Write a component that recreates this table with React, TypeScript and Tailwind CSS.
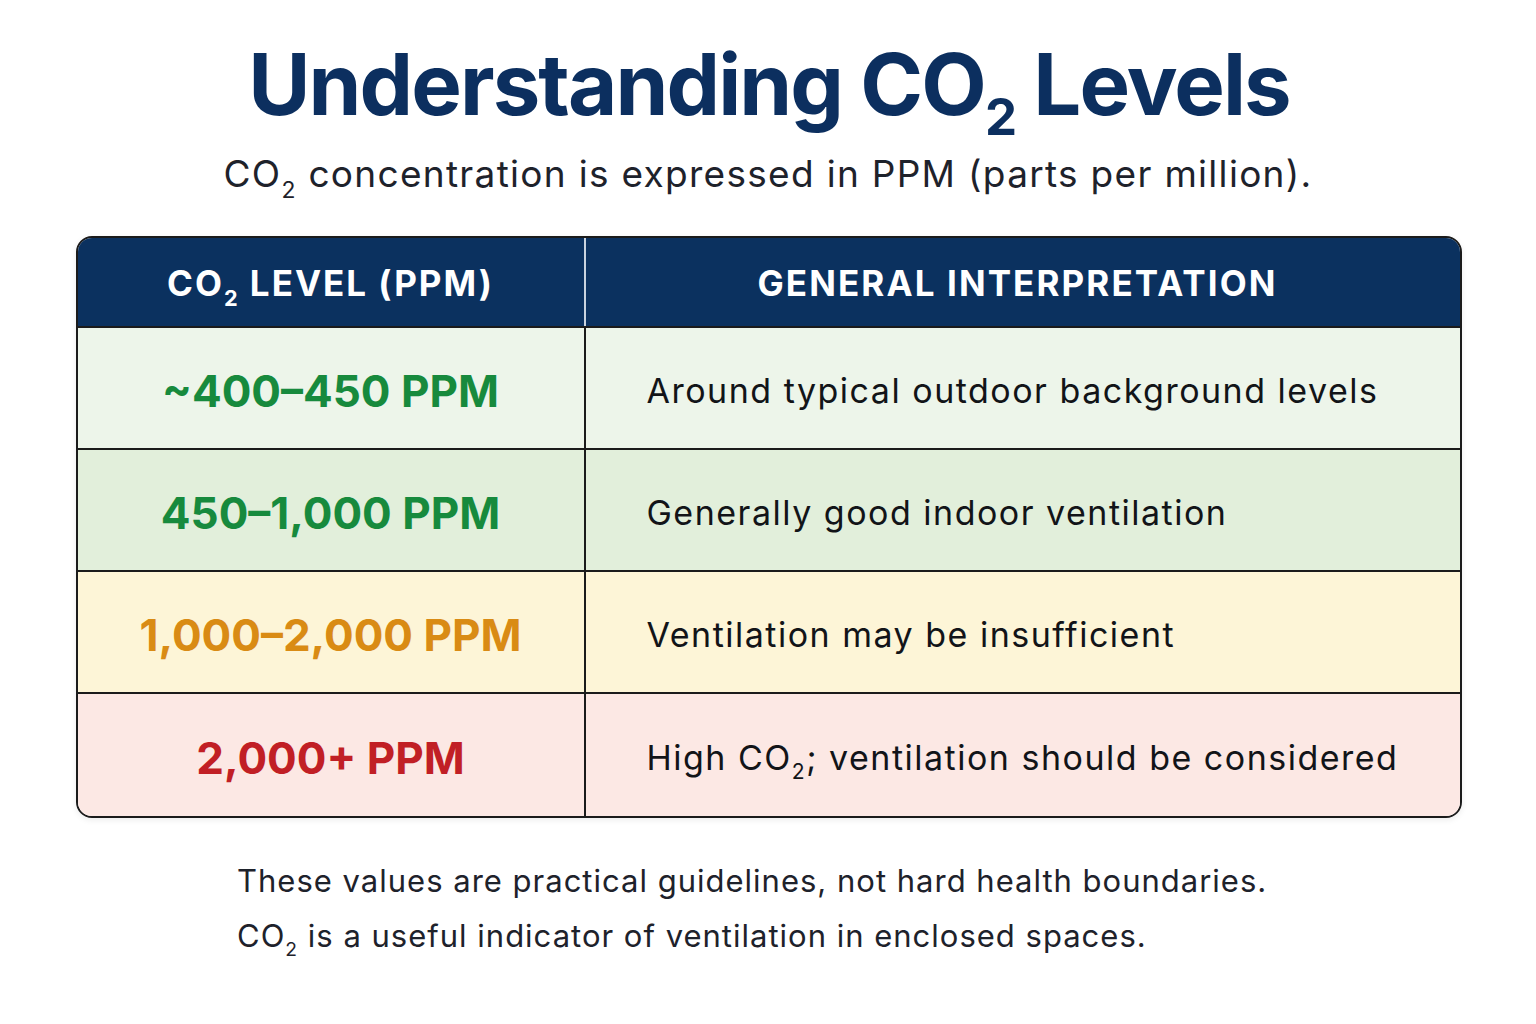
import React from "react";

const Sub = () => <sub className="text-[0.62em] align-[-0.22em] leading-none">2</sub>;

const rows = [
  { v: "~400–450 PPM", c: "text-[#178a3d]", bg: "bg-[#edf5ea]", d: <>Around typical outdoor background levels</> },
  { v: "450–1,000 PPM", c: "text-[#178a3d]", bg: "bg-[#e2efdb]", d: <>Generally good indoor ventilation</> },
  { v: "1,000–2,000 PPM", c: "text-[#d98b14]", bg: "bg-[#fdf5d7]", d: <>Ventilation may be insufficient</> },
  { v: "2,000+ PPM", c: "text-[#c11f25]", bg: "bg-[#fce8e4]", d: <>High CO<Sub />; ventilation should be considered</> },
];

export default function App() {
  return (
    <div className="w-[1536px] h-[1024px] bg-white flex flex-col items-center" style={{ fontFamily: "Inter, 'Noto Sans', sans-serif" }}>
      <h1 className="mt-[38px] text-[85px] leading-[94px] font-bold text-[#0c2f5f] tracking-[-1.9px] ml-[2px]">
        Understanding CO<sub className="text-[0.6em] align-[-0.15em] leading-none">2</sub> Levels
      </h1>
      <p className="mt-[20px] text-[37px] leading-[44px] text-[#1e222b] tracking-[1.3px]">
        CO<Sub /> concentration is expressed in PPM (parts per million).
      </p>
      <div className="mt-[40px] w-[1386px] ml-[1px] border-2 border-[#1b1b1b] rounded-[16px] overflow-hidden shadow-[0_2px_6px_rgba(0,0,0,0.08)]">
        <div className="grid grid-cols-[508px_1fr] h-[90px] bg-[#0b315f] border-b-2 border-[#1b1b1b]">
          <div className="flex items-center justify-center border-r-2 border-[#c9d3df] text-white text-[35px] font-bold tracking-[2px] pt-[3px]">
            <span>CO<Sub /> LEVEL (PPM)</span>
          </div>
          <div className="flex items-center justify-center text-white text-[35px] font-bold tracking-[2.1px] pr-[10px] pt-[3px]">
            GENERAL INTERPRETATION
          </div>
        </div>
        {rows.map((r, i) => (
          <div key={i} className={`grid grid-cols-[508px_1fr] h-[122px] ${r.bg} ${i < rows.length - 1 ? "border-b-2 border-[#1b1b1b]" : ""}`}>
            <div className={`flex items-center justify-center border-r-2 border-[#1b1b1b] font-bold text-[44px] pt-[6px] ${r.c}`}>
              {r.v}
            </div>
            <div className="flex items-center pl-[61px] text-[34px] text-[#121418] tracking-[1.5px] pt-[4px]">
              <span>{r.d}</span>
            </div>
          </div>
        ))}
      </div>
      <div className="self-start ml-[237px] mt-[35px] text-[31px] leading-[55px] text-[#1e222b] tracking-[1px]">
        <p>These values are practical guidelines, not hard health boundaries.</p>
        <p>CO<Sub /> is a useful indicator of ventilation in enclosed spaces.</p>
      </div>
    </div>
  );
}
